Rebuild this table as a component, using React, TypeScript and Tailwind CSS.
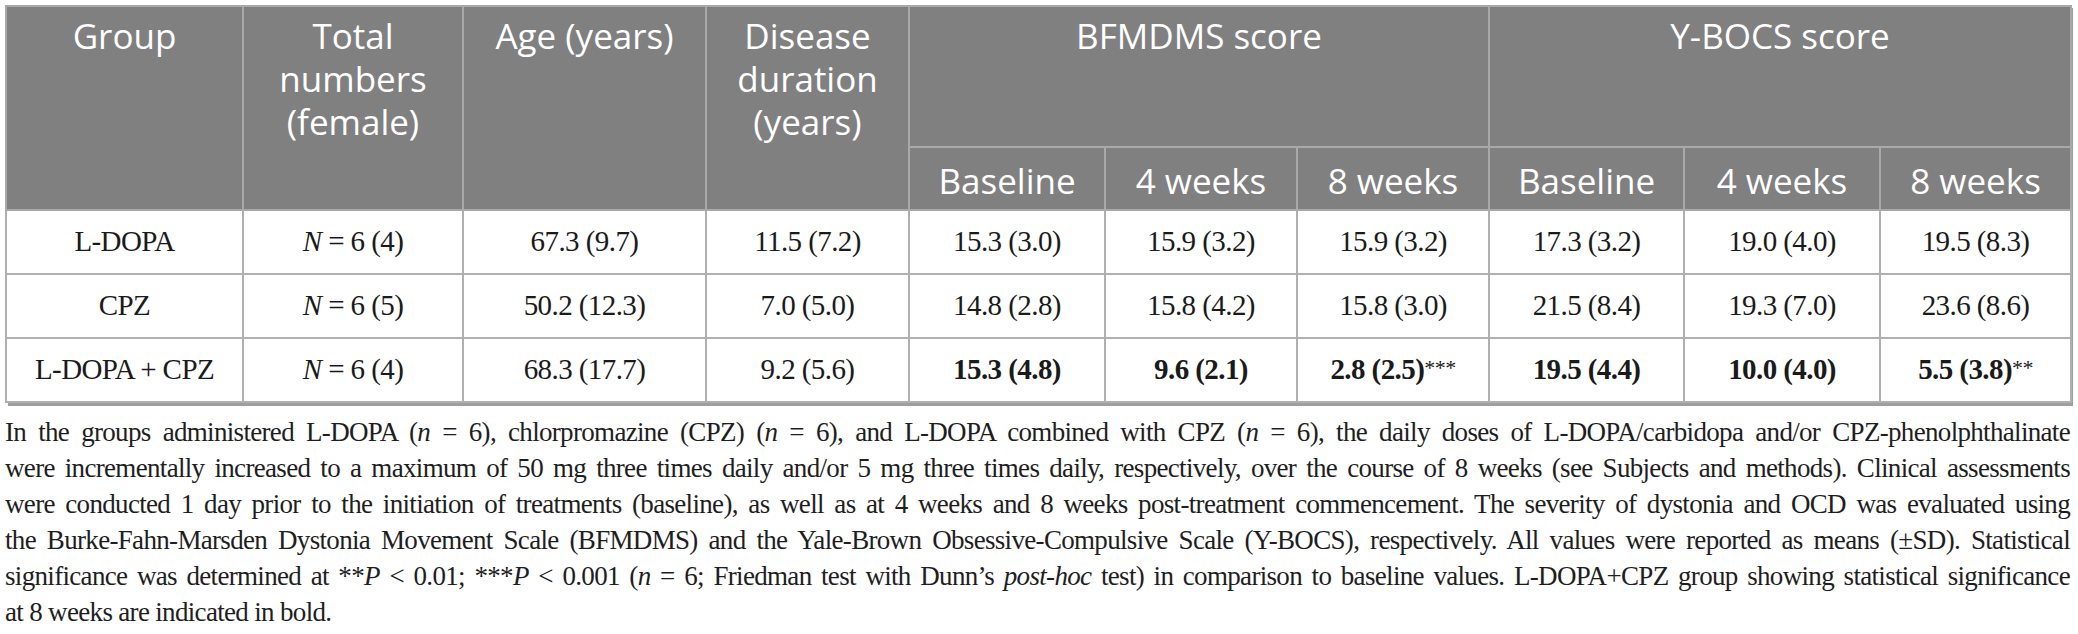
import React from "react";

const headSans = { fontFamily: '"Open Sans", "Noto Sans", sans-serif' };
const serif = { fontFamily: '"Liberation Serif", "Times New Roman", serif' };

type Cell = { v: string; bold?: boolean; star?: string };

const rows: { group: string; n: string; age: string; dur: string; vals: Cell[] }[] = [
  {
    group: "L-DOPA",
    n: "6 (4)",
    age: "67.3 (9.7)",
    dur: "11.5 (7.2)",
    vals: [
      { v: "15.3 (3.0)" },
      { v: "15.9 (3.2)" },
      { v: "15.9 (3.2)" },
      { v: "17.3 (3.2)" },
      { v: "19.0 (4.0)" },
      { v: "19.5 (8.3)" },
    ],
  },
  {
    group: "CPZ",
    n: "6 (5)",
    age: "50.2 (12.3)",
    dur: "7.0 (5.0)",
    vals: [
      { v: "14.8 (2.8)" },
      { v: "15.8 (4.2)" },
      { v: "15.8 (3.0)" },
      { v: "21.5 (8.4)" },
      { v: "19.3 (7.0)" },
      { v: "23.6 (8.6)" },
    ],
  },
  {
    group: "L-DOPA + CPZ",
    n: "6 (4)",
    age: "68.3 (17.7)",
    dur: "9.2 (5.6)",
    vals: [
      { v: "15.3 (4.8)", bold: true },
      { v: "9.6 (2.1)", bold: true },
      { v: "2.8 (2.5)", bold: true, star: "***" },
      { v: "19.5 (4.4)", bold: true },
      { v: "10.0 (4.0)", bold: true },
      { v: "5.5 (3.8)", bold: true, star: "**" },
    ],
  },
];

const th =
  "border-2 border-[#a9a9a9] text-white font-normal text-center align-top leading-[43px] pt-[7px] px-2";
const th2 =
  "border-2 border-[#a9a9a9] text-white font-normal text-center align-middle leading-[43px] pt-[3px] px-2";
const td =
  "border-2 border-[#b0b0b0] text-[#1a1a1a] text-center align-middle text-[29px] tracking-[-0.02em] px-2";

function Line({ children, last }: { children: React.ReactNode; last?: boolean }) {
  return (
    <div
      className={
        last
          ? "text-left leading-[36px]"
          : "text-justify [text-align-last:justify] leading-[36px]"
      }
    >
      {children}
    </div>
  );
}

export default function App() {
  return (
    <div className="w-[2078px] h-[634px] bg-white pl-[5px] pr-[8px] pt-[5px]">
      <div className="shadow-[3px_3px_0_0_#9e9e9e]">
        <table className="w-full table-fixed border-collapse border-2 border-[#c4c4c4]">
          <colgroup>
            <col className="w-[237px]" />
            <col className="w-[220px]" />
            <col className="w-[243px]" />
            <col className="w-[203px]" />
            <col className="w-[196px]" />
            <col className="w-[192px]" />
            <col className="w-[192px]" />
            <col className="w-[195px]" />
            <col className="w-[196px]" />
            <col className="w-[191px]" />
          </colgroup>
          <thead className="bg-[#808080] text-[35px]" style={headSans}>
            <tr className="h-[141px]">
              <th rowSpan={2} className={th}>Group</th>
              <th rowSpan={2} className={th}>
                Total
                <br />
                numbers
                <br />
                (female)
              </th>
              <th rowSpan={2} className={th}>Age (years)</th>
              <th rowSpan={2} className={th}>
                Disease
                <br />
                duration
                <br />
                (years)
              </th>
              <th colSpan={3} className={th}>BFMDMS score</th>
              <th colSpan={3} className={th}>Y-BOCS score</th>
            </tr>
            <tr className="h-[63px]">
              <th className={th2}>Baseline</th>
              <th className={th2}>4 weeks</th>
              <th className={th2}>8 weeks</th>
              <th className={th2}>Baseline</th>
              <th className={th2}>4 weeks</th>
              <th className={th2}>8 weeks</th>
            </tr>
          </thead>
          <tbody style={serif}>
            {rows.map((r) => (
              <tr key={r.group} className="h-[64px]">
                <td className={td}>{r.group}</td>
                <td className={td}>
                  <i>N</i> = {r.n}
                </td>
                <td className={td}>{r.age}</td>
                <td className={td}>{r.dur}</td>
                {r.vals.map((c, i) => (
                  <td key={i} className={td}>
                    <span className={c.bold ? "font-bold" : ""}>{c.v}</span>
                    {c.star && <span className="text-[22px] relative top-[-4px]">{c.star}</span>}
                  </td>
                ))}
              </tr>
            ))}
          </tbody>
        </table>
      </div>
      <div
        className="mt-[11px] w-[2065px] text-[27px] tracking-[-0.025em] text-[#1e1e1e]"
        style={serif}
      >
        <Line>
          In the groups administered L-DOPA (<i>n</i> = 6), chlorpromazine (CPZ) (<i>n</i> = 6), and L-DOPA
          combined with CPZ (<i>n</i> = 6), the daily doses of L-DOPA/carbidopa and/or CPZ-phenolphthalinate
        </Line>
        <Line>
          were incrementally increased to a maximum of 50 mg three times daily and/or 5 mg three times daily,
          respectively, over the course of 8 weeks (see Subjects and methods). Clinical assessments
        </Line>
        <Line>
          were conducted 1 day prior to the initiation of treatments (baseline), as well as at 4 weeks and 8 weeks
          post-treatment commencement. The severity of dystonia and OCD was evaluated using
        </Line>
        <Line>
          the Burke-Fahn-Marsden Dystonia Movement Scale (BFMDMS) and the Yale-Brown Obsessive-Compulsive Scale
          (Y-BOCS), respectively. All values were reported as means (±SD). Statistical
        </Line>
        <Line>
          significance was determined at **<i>P</i> &lt; 0.01; ***<i>P</i> &lt; 0.001 (<i>n</i> = 6; Friedman test
          with Dunn’s <i>post-hoc</i> test) in comparison to baseline values. L-DOPA+CPZ group showing statistical
          significance
        </Line>
        <Line last>at 8 weeks are indicated in bold.</Line>
      </div>
    </div>
  );
}
